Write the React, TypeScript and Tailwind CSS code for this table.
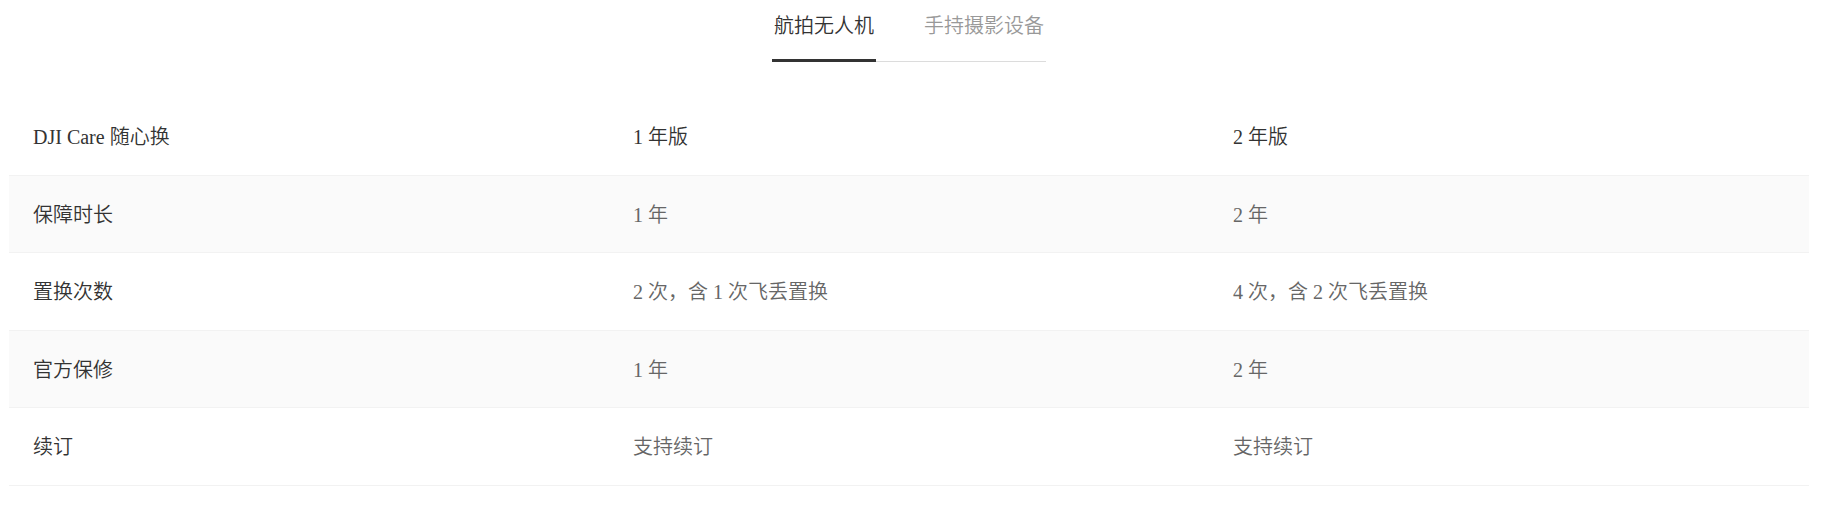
import { useState } from 'react';

const rows = [
  { label: '保障时长', a: '1 年', b: '2 年' },
  { label: '置换次数', a: '2 次，含 1 次飞丢置换', b: '4 次，含 2 次飞丢置换' },
  { label: '官方保修', a: '1 年', b: '2 年' },
  { label: '续订', a: '支持续订', b: '支持续订' },
];

const tabs = ['航拍无人机', '手持摄影设备'];

export default function App() {
  const [active, setActive] = useState(0);

  return (
    <div className="w-full min-h-[528px] bg-white">
      <div className="w-[1800px] ml-[9px]">
        {/* Tabs */}
        <div className="flex justify-center">
          <div className="flex gap-[46px] border-b border-[#dcdcdc]">
            {tabs.map((t, i) => (
              <button
                key={t}
                onClick={() => setActive(i)}
                className={`px-[2px] pt-[11px] pb-[20px] -mb-px border-b-[3px] text-[20px] leading-[28px] font-['Noto_Sans_CJK_SC',sans-serif] font-[350] ${
                  active === i ? 'border-[#333333] text-[#333333]' : 'border-transparent text-[#999999]'
                }`}
              >
                {t}
              </button>
            ))}
          </div>
        </div>

        {/* Table */}
        <div className="mt-[36px] font-['Liberation_Serif','Noto_Sans_CJK_SC',serif] text-[20px] font-[350]">
          <div className="grid grid-cols-3 h-[77.5px] pt-[2px] items-center border-b border-[#f2f2f2] text-[#333333]">
            <div className="pl-[24px]">DJI Care 随心换</div>
            <div className="pl-[24px]">1 年版</div>
            <div className="pl-[24px]">2 年版</div>
          </div>
          {rows.map((r, i) => (
            <div
              key={r.label}
              className={`grid grid-cols-3 h-[77.5px] pt-[2px] items-center border-b border-[#f2f2f2] ${
                i % 2 === 0 ? 'bg-[#fafafa]' : 'bg-white'
              }`}
            >
              <div className="pl-[24px] text-[#333333]">{r.label}</div>
              <div className="pl-[24px] text-[#666666]">{r.a}</div>
              <div className="pl-[24px] text-[#666666]">{r.b}</div>
            </div>
          ))}
        </div>
      </div>
    </div>
  );
}
